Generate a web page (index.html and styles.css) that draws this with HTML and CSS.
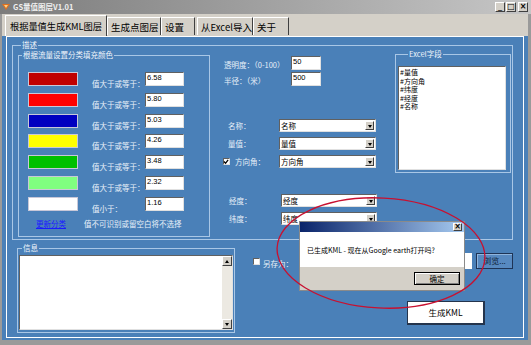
FILE: index.html
```html
<!DOCTYPE html>
<html lang="zh-CN">
<head>
  <meta charset="UTF-8" />
  <title>GS量值图层V1.01</title>
  <link rel="stylesheet" href="styles.css">
</head>
<body>
  <div class="window">
    <div class="titlebar">
      <svg class="app-icon" width="8" height="8" viewBox="0 0 8 8"><path d="M0 1 L8 1 L4 7 Z" fill="#e07020"/><path d="M2 2 L6 2 L4 5 Z" fill="#ffd080"/></svg>
      <span class="title">GS量值图层V1.01</span>
      <div class="ctrls">
        <span class="cbtn">_</span>
        <span class="cbtn">□</span>
        <span class="cbtn close">×</span>
      </div>
    </div>

    <div class="main">
      <div class="tabs">
        <div class="tab active">根据量值生成KML图层</div>
        <div class="tab w54">生成点图层</div>
        <div class="tab w34">设置</div>
        <div class="tab w55 apart">从Excel导入</div>
        <div class="tab w36">关于</div>
      </div>

      <div class="page">
        <div class="group desc">
          <span class="legend">描述</span>

          <div class="group classes">
            <span class="legend">根据流量设置分类填充颜色</span>
            <div class="class-row"><span class="swatch c1"></span><span class="lbl">值大于或等于：</span><span class="field">6.58</span></div>
            <div class="class-row"><span class="swatch c2"></span><span class="lbl">值大于或等于：</span><span class="field">5.80</span></div>
            <div class="class-row"><span class="swatch c3"></span><span class="lbl">值大于或等于：</span><span class="field">5.03</span></div>
            <div class="class-row"><span class="swatch c4"></span><span class="lbl">值大于或等于：</span><span class="field">4.26</span></div>
            <div class="class-row"><span class="swatch c5"></span><span class="lbl">值大于或等于：</span><span class="field">3.48</span></div>
            <div class="class-row"><span class="swatch c6"></span><span class="lbl">值大于或等于：</span><span class="field">2.32</span></div>
            <div class="class-row"><span class="swatch c7"></span><span class="lbl">值小于：</span><span class="field">1.16</span></div>
            <div class="note-row"><a class="link" href="#">更新分类</a><span class="lbl">值不可识别或留空白将不选择</span></div>
          </div>

          <div class="settings">
            <div class="block-a">
              <div class="srow"><span class="slbl">透明度：（0-100）</span><span class="field small">50</span></div>
              <div class="srow tall"><span class="slbl">半径：（米）</span><span class="field small">500</span></div>
            </div>
            <div class="block-b">
              <div class="srow"><span class="slbl">名称：</span><span class="sel">名称<i class="arr"></i></span></div>
              <div class="srow"><span class="slbl">量值：</span><span class="sel">量值<i class="arr"></i></span></div>
              <div class="srow"><span class="slbl chk-lbl"><span class="chk on"><svg width="7" height="7" viewBox="0 0 7 7"><path d="M1 3.5 L3 5.5 L6 1.5" stroke="#000" stroke-width="1.4" fill="none"/></svg></span>方向角：</span><span class="sel">方向角<i class="arr"></i></span></div>
            </div>
            <div class="block-c">
              <div class="srow"><span class="slbl">经度：</span><span class="sel">经度<i class="arr"></i></span></div>
              <div class="srow"><span class="slbl">纬度：</span><span class="sel">纬度<i class="arr"></i></span></div>
            </div>
          </div>

          <div class="group excel">
            <span class="legend">Excel字段</span>
            <div class="listbox">
              <div>#量值</div>
              <div>#方向角</div>
              <div>#纬度</div>
              <div>#经度</div>
              <div>#名称</div>
            </div>
          </div>
        </div>

        <div class="bottom">
          <div class="group info">
            <span class="legend">信息</span>
            <div class="textarea">
              <div class="scroll"><span class="sbtn up"></span><span class="sbtn down"></span></div>
            </div>
          </div>
          <div class="output">
            <div class="save-row">
              <span class="chk"></span>
              <span class="save-lbl">另存为：</span>
              <span class="path"></span>
              <span class="browse">浏览...</span>
            </div>
            <div class="gen">生成KML</div>
          </div>
        </div>
      </div>
    </div>

    <div class="dialog">
      <div class="dlg-title"><span class="dlg-x">×</span></div>
      <div class="dlg-body">已生成KML - 现在从Google earth打开吗?</div>
      <div class="dlg-foot"><span class="ok">确定</span></div>
    </div>

    <svg class="mark" width="531" height="345" viewBox="0 0 531 345">
      <ellipse cx="381" cy="253" rx="104" ry="55" transform="rotate(3 381 253)" fill="none" stroke="#c81030" stroke-width="1.3"/>
    </svg>
  </div>
</body>
</html>
```

FILE: styles.css
```css
body {
  margin: 0;
  font-family: "Noto Sans CJK SC", "Liberation Sans", sans-serif;
}

.window {
  position: relative;
  width: 531px;
  height: 345px;
  background: #9a9a9a;
  display: flex;
  flex-direction: column;
  overflow: hidden;
}

/* title bar */
.titlebar {
  height: 14px;
  background: linear-gradient(to right, #7c7c7c, #c6c6c6);
  display: flex;
  align-items: center;
  padding: 0 3px 0 2px;
}

.app-icon {
  margin-right: 3px;
}

.title {
  font-size: 7.5px;
  line-height: 10px;
  color: #f0f0f0;
  font-weight: bold;
}

.ctrls {
  margin-left: auto;
  display: flex;
  gap: 1px;
}

.cbtn {
  width: 8px;
  height: 8px;
  background: #d4d0c8;
  border: 1px solid;
  border-color: #fff #404040 #404040 #fff;
  font-size: 8px;
  line-height: 7px;
  text-align: center;
  color: #000;
  font-family: "DejaVu Sans", sans-serif;
}

.cbtn.close {
  margin-left: 1px;
  font-weight: bold;
}

/* body of the form */
.main {
  flex: 1;
  margin: 0 3px 5px 2px;
  background: #4a80b8;
  display: flex;
  flex-direction: column;
}

.tabs {
  height: 22px;
  background: #d4d0c8;
  display: flex;
  align-items: flex-end;
  padding-left: 3px;
}

.tab {
  height: 18px;
  border-left: 1px solid #fff;
  border-top: 1px solid #fff;
  border-right: 1px solid #404040;
  font-size: 9.5px;
  line-height: 18px;
  padding-left: 3px;
  box-sizing: border-box;
  color: #000;
  white-space: nowrap;
  overflow: hidden;
  margin-bottom: 1px;
}

.tab.active {
  height: 21px;
  width: 102px;
  line-height: 20px;
  font-size: 9.3px;
  letter-spacing: -0.1px;
  padding-left: 4px;
  margin-bottom: 0;
}

.w54 { width: 54px; }
.w34 { width: 34px; }
.w55 { width: 56px; }
.w36 { width: 36px; }
.apart { margin-left: 2px; }

.page {
  flex: 1;
  margin: 0 4px 2px 4px;
  border: 1px solid #fff;
  display: flex;
  flex-direction: column;
}

/* groups */
.group {
  position: relative;
  box-sizing: border-box;
  border: 1px solid #a9c7e6;
}

.legend {
  position: absolute;
  top: -6px;
  left: 8px;
  padding: 0 1px;
  background: #4a80b8;
  font-size: 7.5px;
  line-height: 10px;
  color: #eef4fb;
  white-space: nowrap;
}

.desc {
  margin: 8px 0 0 5px;
  width: 501px;
  height: 195px;
  display: flex;
  align-items: flex-start;
  padding-left: 5px;
}

.classes {
  margin-top: 9px;
  width: 192px;
  height: 182px;
  padding: 16px 0 0 9px;
  display: flex;
  flex-direction: column;
  gap: 4.8px;
}

.classes .legend {
  left: 3px;
}

.class-row {
  display: flex;
  align-items: flex-start;
  height: 16px;
}

.swatch {
  width: 50px;
  height: 14px;
  box-sizing: border-box;
  border: 1px solid #c8c8d8;
}

.c1 { background: #c00000; }
.c2 { background: #ff0000; }
.c3 { background: #0000c0; }
.c4 { background: #ffff00; }
.c5 { background: #00c000; }
.c6 { background: #80ff80; }
.c7 { background: #ffffff; }

.lbl {
  width: 53px;
  margin-left: 14px;
  padding-top: 7px;
  font-size: 7.5px;
  line-height: 9px;
  color: #e8f0f8;
  white-space: nowrap;
}

.field {
  width: 39px;
  height: 14px;
  box-sizing: border-box;
  background: #fff;
  border: 1px solid;
  border-color: #606060 #e0e0e0 #e0e0e0 #606060;
  font-family: "Liberation Sans", sans-serif;
  font-size: 7.5px;
  line-height: 9px;
  padding-left: 1px;
  color: #000;
}

.field.small {
  width: 30px;
}

.note-row {
  display: flex;
  padding-left: 8px;
  margin-top: 1px;
}

.link {
  width: 48px;
  font-size: 7.5px;
  line-height: 9px;
  color: #1a1aff;
  text-decoration: underline;
}

.note-row .lbl {
  margin-left: 0;
  padding-top: 0;
  width: auto;
}

/* middle settings column */
.settings {
  margin-left: 12px;
  width: 173px;
  padding-top: 10px;
  box-sizing: border-box;
}

.srow {
  display: flex;
  align-items: center;
  height: 13px;
}

.srow.tall {
  height: 14px;
}

.slbl {
  font-size: 7.5px;
  line-height: 9px;
  color: #e8f0f8;
  white-space: nowrap;
  box-sizing: border-box;
}

.block-a {
  display: flex;
  flex-direction: column;
  gap: 3px;
}

.block-a .slbl {
  width: 69px;
  padding: 3px 0 0 2px;
}

.block-b {
  margin-top: 33px;
  display: flex;
  flex-direction: column;
  gap: 5px;
}

.block-b .slbl {
  width: 57px;
  padding-left: 6px;
}

.block-b .chk-lbl {
  padding-left: 1px;
  display: flex;
  align-items: center;
}

.block-c {
  margin-top: 26px;
  display: flex;
  flex-direction: column;
  gap: 5px;
}

.block-c .slbl {
  width: 59px;
  padding-left: 7px;
}

.sel {
  width: 97px;
  height: 13px;
  box-sizing: border-box;
  background: #fff;
  border: 1px solid;
  border-color: #606060 #e0e0e0 #e0e0e0 #606060;
  display: flex;
  align-items: center;
  font-size: 7.5px;
  line-height: 9px;
  padding-left: 1px;
  color: #000;
}

.block-c .sel {
  width: 96px;
}

.arr {
  margin-left: auto;
  margin-right: 1px;
  width: 9px;
  height: 9px;
  box-sizing: border-box;
  background: #d4d0c8;
  border: 1px solid;
  border-color: #fff #404040 #404040 #fff;
  position: relative;
}

.arr::after {
  content: "";
  position: absolute;
  left: 1.5px;
  top: 2.5px;
  border-top: 3px solid #000;
  border-left: 2.5px solid transparent;
  border-right: 2.5px solid transparent;
}

.chk {
  width: 7px;
  height: 7px;
  box-sizing: border-box;
  background: #fff;
  border: 1px solid;
  border-color: #606060 #e0e0e0 #e0e0e0 #606060;
  display: inline-flex;
  margin-right: 5px;
}

.chk svg {
  margin: -1px 0 0 -1px;
}

/* excel list */
.excel {
  margin-top: 8px;
  width: 116px;
  height: 119px;
}

.excel .legend {
  left: 12px;
}

.listbox {
  margin: 11px 0 0 2px;
  width: 108px;
  height: 104px;
  box-sizing: border-box;
  background: #fff;
  border: 1px solid;
  border-color: #606060 #e0e0e0 #e0e0e0 #606060;
  padding: 1px 0 0 1px;
  font-size: 7px;
  line-height: 8.5px;
  color: #000;
}

/* bottom part */
.bottom {
  display: flex;
  align-items: flex-start;
}

.info {
  margin: 8px 0 0 10px;
  width: 218px;
  height: 85px;
}

.info .legend {
  left: 4px;
}

.textarea {
  margin: 6px 0 0 1px;
  width: 214px;
  height: 75px;
  box-sizing: border-box;
  background: #fff;
  border: 1px solid;
  border-color: #606060 #e0e0e0 #e0e0e0 #606060;
  display: flex;
  justify-content: flex-end;
}

.scroll {
  width: 10px;
  background: #ece9e2;
  display: flex;
  flex-direction: column;
  justify-content: space-between;
}

.sbtn {
  width: 10px;
  height: 10px;
  box-sizing: border-box;
  background: #d4d0c8;
  border: 1px solid;
  border-color: #fff #404040 #404040 #fff;
  position: relative;
}

.sbtn::after {
  content: "";
  position: absolute;
  left: 1.5px;
  border-left: 2.5px solid transparent;
  border-right: 2.5px solid transparent;
}

.sbtn.up::after {
  top: 2.5px;
  border-bottom: 3px solid #000;
}

.sbtn.down::after {
  top: 2.5px;
  border-top: 3px solid #000;
}

.output {
  margin: 13px 0 0 18px;
  width: 260px;
}

.save-row {
  display: flex;
  align-items: flex-start;
  height: 16px;
}

.save-row .chk {
  margin: 5px 0 0 0;
}

.save-lbl {
  width: 34px;
  margin-left: 3px;
  padding-top: 6px;
  font-size: 7.5px;
  line-height: 9px;
  color: #e8f0f8;
  white-space: nowrap;
}

.path {
  flex: 1;
  margin-left: 3px;
  height: 16px;
  background: #fff;
}

.browse {
  width: 37px;
  height: 16px;
  margin-left: 4px;
  box-sizing: border-box;
  background: #5789c0;
  border: 1px solid #1e3456;
  box-shadow: inset 1px 1px 0 #8fb4dc;
  font-size: 8px;
  line-height: 14px;
  text-align: center;
  color: #0c1c34;
}

.gen {
  margin: 32px 0 0 154px;
  width: 78px;
  height: 24px;
  box-sizing: border-box;
  background: #fff;
  border: 1px solid #24344c;
  border-right-width: 2px;
  border-bottom-width: 2px;
  font-size: 8.5px;
  line-height: 21px;
  text-align: center;
  color: #000;
}

/* message box */
.dialog {
  position: absolute;
  left: 299px;
  top: 221px;
  width: 166px;
  height: 70px;
  box-sizing: border-box;
  border: 1px solid #8a8a8a;
  background: #d4d0c8;
  display: flex;
  flex-direction: column;
}

.dlg-title {
  height: 10px;
  background: linear-gradient(to right, #0a246a, #a6caf0);
  display: flex;
  justify-content: flex-end;
  align-items: center;
  padding-right: 2px;
}

.dlg-x {
  width: 9px;
  height: 8px;
  box-sizing: border-box;
  background: #d4d0c8;
  border: 1px solid;
  border-color: #fff #404040 #404040 #fff;
  font-family: "DejaVu Sans", sans-serif;
  font-size: 8px;
  line-height: 6px;
  text-align: center;
  font-weight: bold;
  color: #000;
}

.dlg-body {
  height: 35px;
  background: #fff;
  padding: 13px 0 0 7px;
  box-sizing: border-box;
  font-size: 7px;
  line-height: 10px;
  color: #000;
  white-space: nowrap;
}

.dlg-foot {
  flex: 1;
  display: flex;
  justify-content: flex-end;
  padding: 5px 4px 0 0;
}

.ok {
  width: 46px;
  height: 13px;
  box-sizing: border-box;
  background: #d4d0c8;
  border: 1px solid #000;
  box-shadow: inset 1px 1px 0 #fff, inset -1px -1px 0 #808080;
  font-size: 7.5px;
  line-height: 11px;
  text-align: center;
  color: #000;
}

.mark {
  position: absolute;
  left: 0;
  top: 0;
  pointer-events: none;
}
```
